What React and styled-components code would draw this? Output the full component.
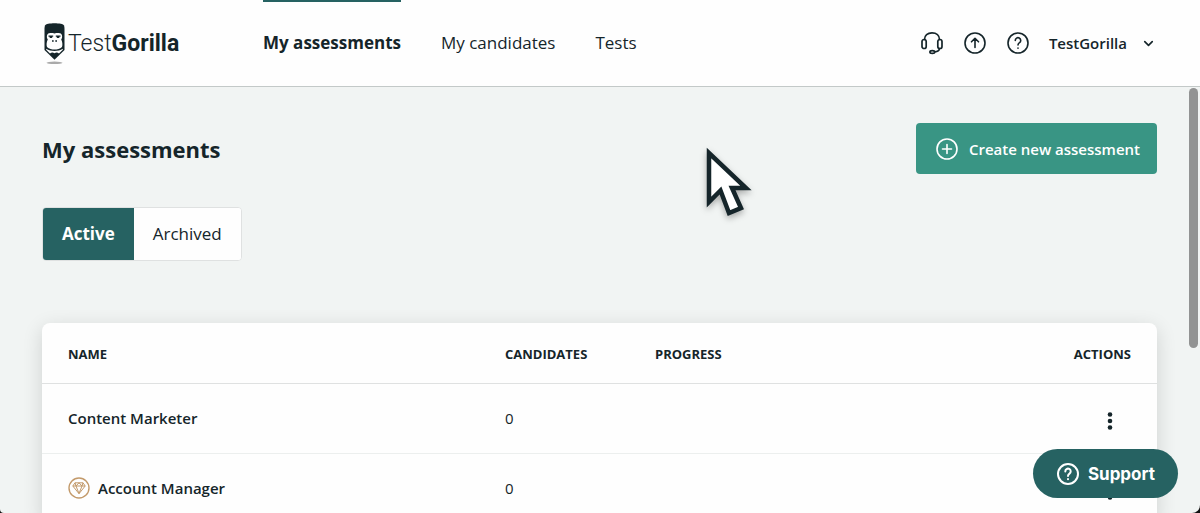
import React from 'react';
import styled, {createGlobalStyle, ThemeProvider} from 'styled-components';

const theme = {
    ink: '#15252a',
    dark: '#266262',
    green: '#399584',
    page: '#f1f4f3',
    line: '#dfe1e1',
    gold: '#c39a6b',
}

const GlobalStyle = createGlobalStyle`
    * {
        box-sizing: border-box;
    }

    body {
        margin: 0;
        background: #111;
        color: ${theme.ink};
        font-family: 'Open Sans', sans-serif;
        font-size: 15px;
    }

    button {
        font: inherit;
        color: inherit;
        border: 0;
        padding: 0;
        background: none;
        cursor: pointer;
    }

    svg {
        display: block;
        flex: none;
    }
`

const Window = styled.div`
    position: relative;
    height: 100vh;
    display: flex;
    flex-direction: column;
    overflow: hidden;
    background: ${props => props.theme.page};
    border-radius: 0 0 8px 4px;
`

const Header = styled.header`
    flex: none;
    display: flex;
    height: 87px;
    padding: 0 44px 0 42px;
    background: #fefefe;
    border-bottom: 1px solid #c3c9c8;
`

const Logo = styled.a`
    display: flex;
    align-items: center;
    width: 221px;
    color: inherit;
    text-decoration: none;
    font-family: Roboto, sans-serif;
    font-size: 23px;
    font-weight: 300;

    & svg {
        margin-right: 1px;
    }

    & b {
        font-weight: 700;
    }
`

const Nav = styled.nav`
    display: flex;
    gap: 40px;
    flex: 1;
`

const NavItem = styled.a`
    padding-top: 29px;
    line-height: 24px;
    border-top: 2px solid ${props => props.$active ? props.theme.dark : 'transparent'};
    color: inherit;
    font-size: 17px;
    font-weight: ${props => props.$active ? 700 : 400};
    text-decoration: none;
`

const Tools = styled.div`
    display: flex;
    align-items: center;
    gap: 19px;
`

const Account = styled.button`
    display: flex;
    align-items: center;
    gap: 14px;
    font-weight: 600;
`

const Main = styled.main`
    flex: 1;
    min-height: 0;
    overflow: hidden;
    padding: 36px 43px 0 42px;
`

const TitleRow = styled.div`
    display: flex;
    align-items: center;
    justify-content: space-between;
`

const Title = styled.h1`
    margin: 0;
    font-size: 22px;
    font-weight: 700;
    line-height: 30px;
`

const CreateButton = styled.button`
    display: flex;
    align-items: center;
    gap: 10px;
    height: 51px;
    padding: 0 17px 0 19px;
    border-radius: 4px;
    background: ${props => props.theme.green};
    color: #fff;
    font-weight: 600;
`

const Tabs = styled.div`
    display: flex;
    width: fit-content;
    height: 54px;
    margin: 33px 0 62px;
    overflow: hidden;
    border: 1px solid ${props => props.theme.line};
    border-radius: 4px;
    background: #fff;
`

const Tab = styled.button`
    padding: 0 19px 2px;
    font-size: 17px;
    font-weight: ${props => props.$active ? 700 : 400};
    background: ${props => props.$active ? props.theme.dark : '#fefefe'};
    color: ${props => props.$active ? '#fff' : 'inherit'};
`

const Card = styled.div`
    overflow: hidden;
    border-radius: 8px;
    background: #fefefe;
    box-shadow: 0 5px 20px rgba(0, 0, 0, 0.14);
`

const Table = styled.table`
    width: 100%;
    table-layout: fixed;
    border-collapse: collapse;
`

const HeadCell = styled.th`
    width: ${props => props.$width || 'auto'};
    height: 60px;
    padding: 2px 26px 0 0;
    border-bottom: 1px solid ${props => props.theme.line};
    font-size: 13px;
    font-weight: 700;
    text-align: ${props => props.$right ? 'right' : 'left'};

    &:first-child {
        padding-left: 26px;
    }
`

const Cell = styled.td`
    height: 70px;
    padding: 0;
    border-bottom: 1px solid #ecefee;
    font-weight: ${props => props.$strong ? 600 : 400};

    &:first-child {
        padding-left: 26px;
    }
`

const Name = styled.div`
    display: flex;
    align-items: center;
    gap: 8px;
`

const MenuButton = styled.button`
    display: block;
    margin: 0 42px 0 auto;
    padding-top: 5px;
`

const ScrollThumb = styled.div`
    position: absolute;
    top: 88px;
    right: 2px;
    width: 9px;
    height: 260px;
    border-radius: 5px;
    background: #929393;
`

const Support = styled.button`
    position: absolute;
    right: 22px;
    bottom: 15px;
    display: flex;
    align-items: center;
    gap: 8px;
    height: 49px;
    padding: 0 23px;
    border-radius: 25px;
    background: ${props => props.theme.dark};
    color: #fff;
    font-family: Inter, sans-serif;
    font-size: 17px;
    font-weight: 700;
`

const Pointer = styled.svg`
    position: absolute;
    left: 702px;
    top: 141px;
    filter: drop-shadow(0 3px 3px rgba(0, 0, 0, 0.3));
`

const LineIcon = ({size = 24, width = 1.6, children}) => (
    <svg width={size} height={size} viewBox="0 0 24 24" fill="none" stroke="currentColor"
         strokeWidth={width} strokeLinecap="round" strokeLinejoin="round" aria-hidden="true">
        {children}
    </svg>
)

const HelpIcon = ({width}) => (
    <LineIcon width={width}>
        <circle cx="12" cy="12" r="10"/>
        <path d="M9.3 9.4a2.7 2.7 0 1 1 4.2 2.2c-1 .7-1.5 1.2-1.5 2.3"/>
        <path d="M12 17v.2"/>
    </LineIcon>
)

const HeadsetIcon = () => (
    <LineIcon width={1.7}>
        <path d="M4.5 8.5C4.5 4.3 7.6 1.8 12 1.8s7.5 2.5 7.5 6.7"/>
        <rect x="2" y="8.5" width="4.2" height="9" rx="2.1"/>
        <rect x="17.8" y="8.5" width="4.2" height="9" rx="2.1"/>
        <path d="M19.5 17.5c-.2 2.2-2 3.200-4.800 3.400"/>
        <ellipse cx="12.3" cy="21" rx="2.4" ry="1.4"/>
    </LineIcon>
)

const DiamondIcon = () => (
    <svg width="22" height="22" viewBox="0 0 22 22" fill="none" stroke={theme.gold} strokeLinejoin="round" aria-hidden="true">
        <circle cx="11" cy="11" r="10" strokeWidth="1.4"/>
        <path d="M7 5.8h8l2.2 3.2L11 16.7 4.8 9zM4.8 9h12.4M8 9l3 7.5L14 9M7 5.8L8 9l3-3.2L14 9l1-3.2"/>
    </svg>
)

const LogoMark = () => (
    <svg width="25" height="42" viewBox="0 0 25 42" aria-hidden="true">
        <ellipse cx="12.5" cy="40.8" rx="8" ry="1.2" fill="#aaa"/>
        <path fill={theme.ink} d="M3 3.5C4 .6 21 .6 22 3.5c.3 1 .5 2 .5 3V28l-10 9.8L2.5 28V6.500c0-1 .2-2 .5-3z"/>
        <path fill="#fefefe" d="M5.500 12.200c1.500-1.400 4.500-1.200 7-.7 2.500-.5 5.500-.7 7 .7.900 1.600.9 3.900-.3 5.300 1.200 2 1.600 5.200.8 7.500-2 2-5 2.500-7.500 2.500S7 27 5 25c-.8-2.300-.4-5.500.8-7.500-1.200-1.400-1.200-3.700-.3-5.300z"/>
        <path fill="#fefefe" d="M4.200 26.800c2.300 1.700 5.300 2.200 8.300 2.200s6-.5 8.300-2.200v1l-3.800 3.700c-1.500-1.200-3-1.200-4.500-.3-1.500-.9-3-.9-4.500.3l-3.800-3.700z"/>
        <path fill={theme.ink} d="M6.500 13.500h4.700v1.200h-1v1.200H7.700v-1.200H6.500zM13.800 13.500h4.700v1.200h-1.200v1.200h-2.500v-1.200h-1zM10 18.200h1.700v1.600H10zM13.300 18.200H15v1.600h-1.700z"/>
    </svg>
)

const assessments = [
    {name: 'Content Marketer', candidates: 0},
    {name: 'Account Manager', candidates: 0, premium: true},
]

const AssessmentRow = ({name, candidates, premium}) => (
    <tr>
        <Cell $strong><Name>{premium && <DiamondIcon/>}{name}</Name></Cell>
        <Cell>{candidates}</Cell>
        <Cell/>
        <Cell>
            <MenuButton aria-label={'Actions'}>
                <svg width="10" height="20" fill="currentColor">
                    <circle cx="5" cy="3.5" r="2.3"/>
                    <circle cx="5" cy="10" r="2.3"/>
                    <circle cx="5" cy="16.5" r="2.3"/>
                </svg>
            </MenuButton>
        </Cell>
    </tr>
)

const App = () => {
    return (<ThemeProvider theme={theme}>
        <GlobalStyle/>
        <Window>
            <Header>
                <Logo href="#"><LogoMark/>Test<b>Gorilla</b></Logo>
                <Nav>
                    <NavItem href="#" $active>My assessments</NavItem>
                    <NavItem href="#">My candidates</NavItem>
                    <NavItem href="#">Tests</NavItem>
                </Nav>
                <Tools>
                    <button aria-label={'Contact'}><HeadsetIcon/></button>
                    <button aria-label={'Upgrade'}>
                        <LineIcon>
                            <circle cx="12" cy="12" r="10"/>
                            <path d="M12 16.5v-9M8.5 10.8L12 7.3l3.5 3.5"/>
                        </LineIcon>
                    </button>
                    <button aria-label={'Help'}><HelpIcon/></button>
                    <Account>
                        TestGorilla
                        <LineIcon size={15} width={2.6}><path d="M6 9l6 6 6-6"/></LineIcon>
                    </Account>
                </Tools>
            </Header>

            <Main>
                <TitleRow>
                    <Title>My assessments</Title>
                    <CreateButton>
                        <LineIcon>
                            <circle cx="12" cy="12" r="10"/>
                            <path d="M12 7.5v9M7.5 12h9"/>
                        </LineIcon>
                        Create new assessment
                    </CreateButton>
                </TitleRow>

                <Tabs>
                    <Tab $active>Active</Tab>
                    <Tab>Archived</Tab>
                </Tabs>

                <Card>
                    <Table>
                        <thead>
                            <tr>
                                <HeadCell $width="463px">NAME</HeadCell>
                                <HeadCell $width="150px">CANDIDATES</HeadCell>
                                <HeadCell>PROGRESS</HeadCell>
                                <HeadCell $right>ACTIONS</HeadCell>
                            </tr>
                        </thead>
                        <tbody>
                            {assessments.map(item => <AssessmentRow key={item.name} {...item}/>)}
                        </tbody>
                    </Table>
                </Card>
            </Main>

            <ScrollThumb/>
            <Support><HelpIcon width={2}/>Support</Support>
            <Pointer width="54" height="80" viewBox="0 0 54 80" aria-hidden="true">
                <path d="M7 12v49l11.5-11.500 8.500 22.500 12-5-9-20h14z" fill="#fff" stroke={theme.ink} strokeWidth="4.5"/>
            </Pointer>
        </Window>
    </ThemeProvider>);
};

export default App;
